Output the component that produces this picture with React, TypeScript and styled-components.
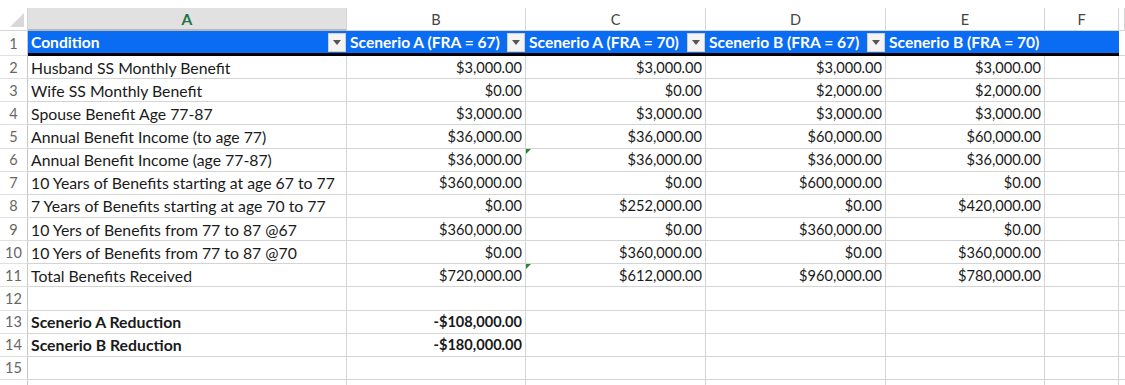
import React from 'react'
import styled, { createGlobalStyle, css } from 'styled-components'

const GlobalStyle = createGlobalStyle`
  html, body {
    margin: 0;
    padding: 0;
    background: #fff;
  }
  body {
    font-family: Lato, "Liberation Sans", sans-serif;
    -webkit-font-smoothing: antialiased;
  }
`

const cols = ['A', 'B', 'C', 'D', 'E', 'F', '']

const headers = [
  'Condition',
  'Scenerio A (FRA = 67)',
  'Scenerio A (FRA = 70)',
  'Scenerio B (FRA = 67)',
  'Scenerio B (FRA = 70)',
]

type Row = { label: string; values: string[]; bold?: boolean; flag?: number; num?: boolean }

const rows: Row[] = [
  { label: 'Husband SS Monthly Benefit', values: ['$3,000.00', '$3,000.00', '$3,000.00', '$3,000.00'] },
  { label: 'Wife SS Monthly Benefit', values: ['$0.00', '$0.00', '$2,000.00', '$2,000.00'] },
  { label: 'Spouse Benefit Age 77-87', values: ['$3,000.00', '$3,000.00', '$3,000.00', '$3,000.00'] },
  { label: 'Annual Benefit Income (to age 77)', values: ['$36,000.00', '$36,000.00', '$60,000.00', '$60,000.00'] },
  { label: 'Annual Benefit Income (age 77-87)', values: ['$36,000.00', '$36,000.00', '$36,000.00', '$36,000.00'], flag: 1 },
  { label: '10 Years of Benefits starting at age 67 to 77', values: ['$360,000.00', '$0.00', '$600,000.00', '$0.00'] },
  { label: '7 Years of Benefits starting at age 70 to 77', values: ['$0.00', '$252,000.00', '$0.00', '$420,000.00'] },
  { label: '10 Yers of Benefits from 77 to 87 @67', values: ['$360,000.00', '$0.00', '$360,000.00', '$0.00'] },
  { label: '10 Yers of Benefits from 77 to 87 @70', values: ['$0.00', '$360,000.00', '$0.00', '$360,000.00'] },
  { label: 'Total Benefits Received', values: ['$720,000.00', '$612,000.00', '$960,000.00', '$780,000.00'], flag: 1 },
  { label: '', values: ['', '', '', ''] },
  { label: 'Scenerio A Reduction', values: ['-$108,000.00', '', '', ''], bold: true },
  { label: 'Scenerio B Reduction', values: ['-$180,000.00', '', '', ''], bold: true },
  { label: '', values: ['', '', '', ''] },
  { label: '', values: ['', '', '', ''], num: false },
]

const App = () => {
  return (
    <Page>
      <GlobalStyle />
      <Sheet>
        <Corner>
          <svg width="14" height="14" viewBox="0 0 14 14">
            <polygon points="14,0 14,14 0,14" fill="#d8d8d8" />
          </svg>
        </Corner>
        {cols.map((c, i) => (
          <ColHead key={i} $active={c === 'A'}>{c}</ColHead>
        ))}

        <RowHead>1</RowHead>
        {headers.map((h, i) => (
          <HeadCell key={i}>
            <span>{h}</span>
            {i < 4 && (
              <FilterButton>
                <svg width="8" height="5" viewBox="0 0 8 5">
                  <polygon points="0,0 8,0 4,5" fill="#555" />
                </svg>
              </FilterButton>
            )}
          </HeadCell>
        ))}
        <HeadCell />
        <Cell $blank />

        {rows.map((r, i) => (
          <React.Fragment key={i}>
            <RowHead>{r.num === false ? '' : i + 2}</RowHead>
            <Cell $bold={r.bold}>{r.label}</Cell>
            {r.values.map((v, j) => (
              <Cell key={j} $right $bold={r.bold} $flag={r.flag === j}>{v}</Cell>
            ))}
            <Cell />
            <Cell $blank />
          </React.Fragment>
        ))}
      </Sheet>
    </Page>
  )
}

export default App

const Page = styled.div`
  width: 1125px;
  height: 385px;
  overflow: hidden;
  padding-top: 8px;
  box-sizing: border-box;
`

const Sheet = styled.div`
  display: grid;
  grid-template-columns: 28px 319px 179px 180px 180px 159px 74px 1fr;
  grid-template-rows: 23px 25px repeat(15, 23.15px);
`

const Corner = styled.div`
  box-sizing: border-box;
  border-right: 1px solid #d4d4d4;
  border-bottom: 1px solid #d4d4d4;
  display: flex;
  align-items: flex-end;
  justify-content: flex-end;
  padding: 0 3px 3px 0;
  background: #fff;
`

const ColHead = styled.div<{ $active?: boolean }>`
  box-sizing: border-box;
  border-right: 1px solid #d4d4d4;
  border-bottom: 1px solid #d4d4d4;
  display: flex;
  align-items: center;
  justify-content: center;
  font-size: 14.5px;
  color: #444;
  background: #fff;
  ${p => p.$active && css`
    background: #e1e1e1;
    color: #217346;
    font-weight: 700;
    border-bottom: 2px solid #b8b8b8;
    font-size: 15.5px;
  `}
`

const RowHead = styled.div`
  box-sizing: border-box;
  border-right: 1px solid #c8c8c8;
  border-bottom: 1px solid #e0e0e0;
  display: flex;
  align-items: center;
  justify-content: center;
  font-size: 14.5px;
  color: #666;
  background: #fff;
`

const HeadCell = styled.div`
  box-sizing: border-box;
  background: #0a6cf2;
  border-bottom: 3px solid #000;
  display: flex;
  align-items: center;
  justify-content: space-between;
  padding: 0 1px 0 3px;
  color: #fff;
  font-weight: 700;
  font-size: 15.6px;
  white-space: nowrap;
  overflow: hidden;
`

const FilterButton = styled.div`
  box-sizing: border-box;
  width: 18px;
  height: 19px;
  background: #f4f4f4;
  border: 1px solid #cfcfcf;
  display: flex;
  align-items: center;
  justify-content: center;
`

const Cell = styled.div<{ $right?: boolean; $bold?: boolean; $flag?: boolean; $blank?: boolean }>`
  position: relative;
  box-sizing: border-box;
  border-right: 1px solid #d4d4d4;
  border-bottom: 1px solid #d4d4d4;
  display: flex;
  align-items: center;
  justify-content: ${p => (p.$right ? 'flex-end' : 'flex-start')};
  padding: 0 3px;
  font-size: ${p => (p.$right ? '14.6px' : '15.8px')};
  color: #1a1a1a;
  font-weight: ${p => (p.$bold ? 700 : 400)};
  white-space: nowrap;
  ${p => p.$blank && css`
    border-right: none;
  `}
  ${p => p.$flag && css`
    &::before {
      content: '';
      position: absolute;
      left: 0;
      top: 0;
      width: 0;
      height: 0;
      border-top: 5px solid #1f8a2e;
      border-right: 5px solid transparent;
    }
  `}
`
